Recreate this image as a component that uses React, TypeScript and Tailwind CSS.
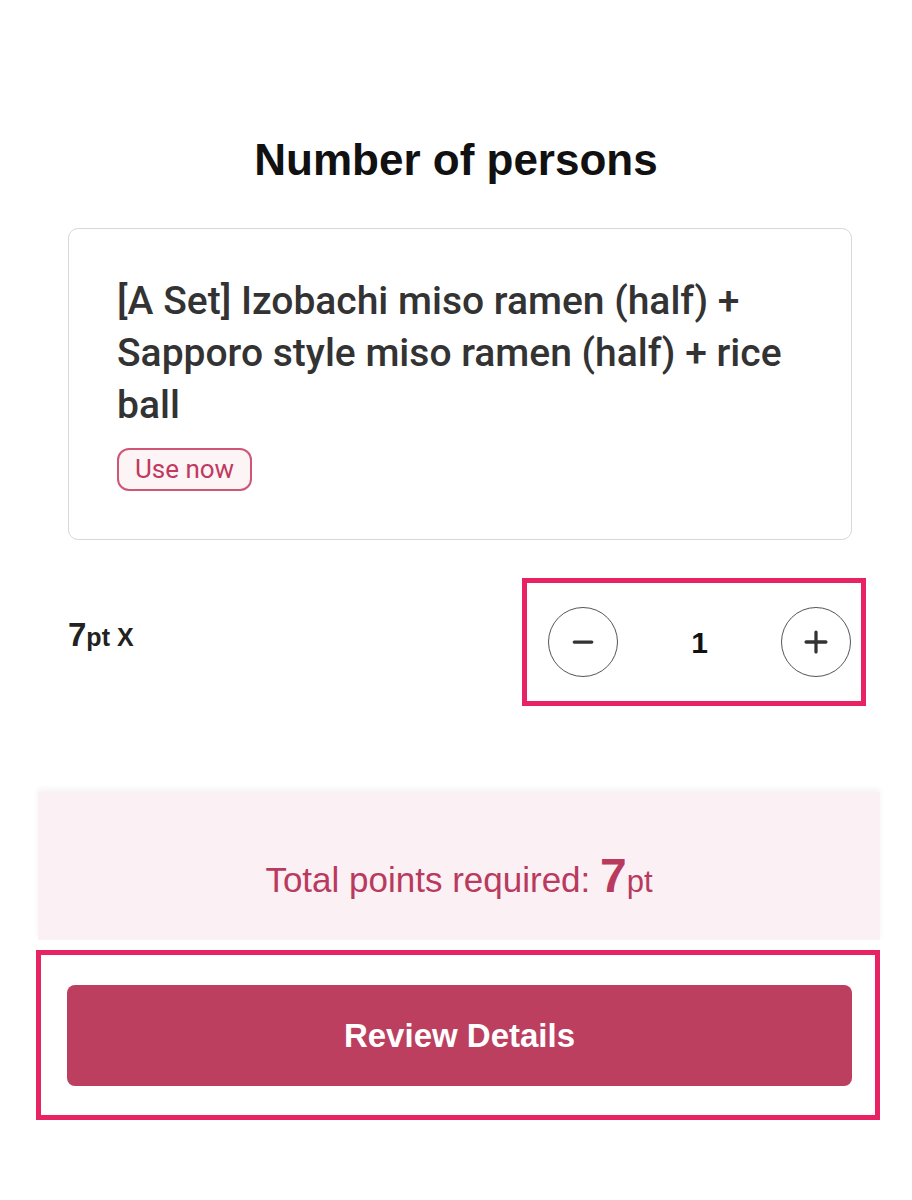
import { Minus, Plus } from "lucide-react";

const font = { fontFamily: '"Liberation Sans", Arial, sans-serif' };

function Stepper() {
  return (
    <div className="-mr-[14px] border-[5px] border-[#e82363]">
      <div className="flex h-[118px] w-[334px] items-center justify-between pl-[21px] pr-[10px]">
        <button className="flex h-[70px] w-[70px] items-center justify-center rounded-full border-[1.5px] border-[#555]">
          <Minus className="h-[30px] w-[30px] text-[#333]" strokeWidth={2.6} />
        </button>
        <span className="text-[30px] font-bold text-[#111]">1</span>
        <button className="flex h-[70px] w-[70px] items-center justify-center rounded-full border-[1.5px] border-[#555]">
          <Plus className="h-[34px] w-[34px] text-[#333]" strokeWidth={2.3} />
        </button>
      </div>
    </div>
  );
}

export default function App() {
  return (
    <div className="h-[1200px] w-[912px] bg-white" style={font}>
      <h1 className="pt-[138px] text-center text-[44px] font-bold leading-none text-[#111]">
        Number of persons
      </h1>

      <div className="ml-[68px] mr-[60px] mt-[46px] rounded-[10px] border-[1.5px] border-[#d8d8d8] px-[48px] pb-[48px] pt-[46px]">
        <p
          className="text-[39px] font-medium leading-[52px] text-[#333]"
          style={{ fontFamily: "Roboto, sans-serif" }}
        >
          [A Set] Izobachi miso ramen (half) + Sapporo style miso ramen (half) + rice ball
        </p>
        <span
          className="mt-[17px] inline-flex h-[43px] w-[135px] items-center justify-center rounded-[12px] border-2 border-[#d05577] bg-[#fdf4f6] text-[26px] text-[#c2395f]"
          style={{ fontFamily: "Roboto, sans-serif" }}
        >
          Use now
        </span>
      </div>

      <div className="ml-[68px] mr-[60px] mt-[38px] flex items-center justify-between">
        <div className="-mt-[14px] flex items-baseline font-bold text-[#222]">
          <span className="text-[33px]">7</span>
          <span className="text-[25px]">pt X</span>
        </div>
        <Stepper />
      </div>

      <div className="ml-[38px] mr-[32px] mt-[86px] flex h-[148px] items-center justify-center bg-[#fbf0f3] pt-[26px] shadow-[0_-3px_6px_rgba(0,0,0,0.05)]">
        <p className="flex items-baseline text-[#b83a5e]">
          <span className="text-[35px]">Total points required:&nbsp;</span>
          <span className="text-[48px] font-bold leading-none">7</span>
          <span className="text-[31px]">pt</span>
        </p>
      </div>

      <div className="ml-[36px] mr-[32px] mt-[10px] border-[5px] border-[#e82363] pb-[29px] pl-[26px] pr-[23px] pt-[30px]">
        <button className="flex h-[101px] w-full items-center justify-center rounded-[8px] bg-[#bc3f60] text-[33px] font-bold text-white">
          Review Details
        </button>
      </div>
    </div>
  );
}
